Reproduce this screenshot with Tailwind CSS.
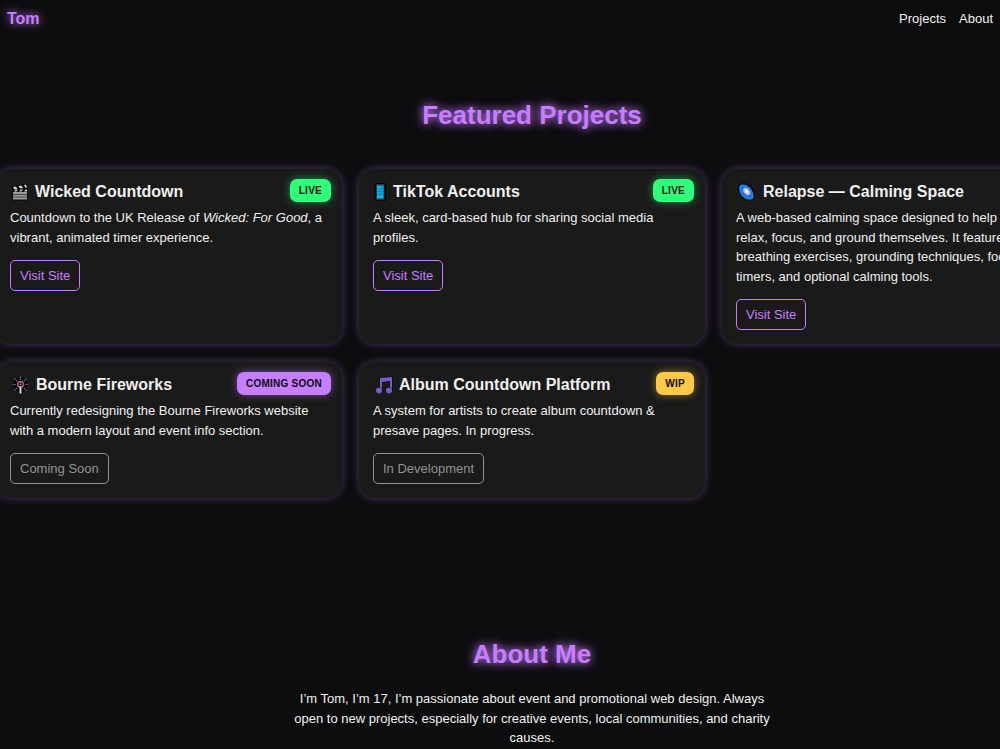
<!DOCTYPE html>
<html lang="en">
<head>
    <meta charset="UTF-8">
    <meta name="viewport" content="width=device-width, initial-scale=1.0">
    <title>Tom</title>
    <script src="https://cdn.jsdelivr.net/npm/@tailwindcss/browser@4"></script>
</head>
<body class="bg-[#0d0d0f] text-[#f0f0f0] font-['Liberation_Sans',Arial,sans-serif] text-[13px] leading-normal overflow-x-hidden">
    <!-- Navbar -->
    <header class="flex items-center justify-between px-[7px] h-[37px]">
        <a href="#" class="text-[16px] font-bold text-[#c77dff] [text-shadow:0_0_10px_#c77dff]">Tom</a>
        <nav class="flex gap-[13px]">
            <a href="#projects" class="hover:text-[#c77dff]">Projects</a>
            <a href="#about" class="hover:text-[#c77dff]">About</a>
        </nav>
    </header>

    <main class="-ml-1 -mr-[68px]">
        <!-- Projects -->
        <section id="projects" class="pt-[59px]">
            <h2 class="text-center text-[26px] font-bold text-[#c77dff] [text-shadow:0_0_8px_#c77dff,0_0_16px_rgba(199,125,255,0.4)] mb-[34px]">Featured Projects</h2>
            <div class="grid grid-cols-3 gap-x-[17px] gap-y-[18px]">
                <!-- Wicked -->
                <article class="relative bg-[#1a1a1a] rounded-[16px] p-[14px] pt-[13px] shadow-[0_0_8px_rgba(199,125,255,0.35)]">
                    <span class="absolute top-[10px] right-[11px] px-[9px] h-[23px] leading-[23px] rounded-[7px] bg-[#2eff7b] text-[#0d0d0f] text-[10px] font-bold tracking-wide shadow-[0_0_8px_rgba(46,255,123,0.5)]">LIVE</span>
                    <h3 class="flex items-center gap-[5px] text-[16px] leading-[20px] font-bold mb-[6px]">
                        <svg class="w-[20px] h-[20px] shrink-0" viewBox="0 0 20 20" aria-hidden="true">
                            <path d="M2 4.500 16 2l1.500.5v16H2z" fill="#050505"/>
                            <path d="M3 10h14v7.500H3z" fill="#9c9c9c"/>
                            <path d="M3 12.500h14M3 15h14" stroke="#444" stroke-width="1"/>
                            <path d="M3 5l3-.5 1.500 2.500-3 .5zM8.500 4l3-.5L13 6l-3 .5zM14 3l2-.5 1 3-1.500.5z" fill="#d0d0d0"/>
                            <path d="M4 9.500l1.500-2h2.500l-1.500 2zM9 9.500l1.500-2H13l-1.500 2zM14 9.500l1.500-2H17v2z" fill="#c4c4c4"/>
                        </svg>
                        Wicked Countdown
                    </h3>
                    <p class="mb-[13px]">Countdown to the UK Release of <em>Wicked: For Good</em>, a vibrant, animated timer experience.</p>
                    <a href="#" class="inline-block h-[31px] leading-[29px] px-[9px] border border-[#c77dff] rounded-[5px] text-[#c77dff]">Visit Site</a>
                </article>

                <!-- TikTok -->
                <article class="relative bg-[#1a1a1a] rounded-[16px] p-[14px] pt-[13px] shadow-[0_0_8px_rgba(199,125,255,0.35)]">
                    <span class="absolute top-[10px] right-[11px] px-[9px] h-[23px] leading-[23px] rounded-[7px] bg-[#2eff7b] text-[#0d0d0f] text-[10px] font-bold tracking-wide shadow-[0_0_8px_rgba(46,255,123,0.5)]">LIVE</span>
                    <h3 class="flex items-center gap-[5px] text-[16px] leading-[20px] font-bold mb-[6px]">
                        <svg class="w-[15px] h-[20px] shrink-0" viewBox="0 0 15 20" aria-hidden="true">
                            <rect x="1.500" y="1" width="11.500" height="18" rx="1.500" fill="#050505"/>
                            <rect x="3" y="2" width="8.500" height="16" rx="1" fill="#333"/>
                            <rect x="4" y="3.500" width="6.500" height="13" fill="#0cb4f2"/>
                            <path d="M4 6.500h6.500M4 9.500h6.500M4 12.500h6.500M6.500 6v8M8.500 3.500v10" stroke="#0877a8" stroke-width=".6"/>
                        </svg>
                        TikTok Accounts
                    </h3>
                    <p class="mb-[13px]">A sleek, card-based hub for sharing social media profiles.</p>
                    <a href="#" class="inline-block h-[31px] leading-[29px] px-[9px] border border-[#c77dff] rounded-[5px] text-[#c77dff]">Visit Site</a>
                </article>

                <!-- Relapse -->
                <article class="relative bg-[#1a1a1a] rounded-[16px] p-[14px] pt-[13px] shadow-[0_0_8px_rgba(199,125,255,0.35)]">
                    <h3 class="flex items-center gap-[5px] text-[16px] leading-[20px] font-bold mb-[6px]">
                        <svg class="w-[22px] h-[20px] shrink-0" viewBox="0 0 22 20" aria-hidden="true">
                            <defs>
                                <radialGradient id="core">
                                    <stop offset="0" stop-color="#fff"/>
                                    <stop offset=".45" stop-color="#e3d0ff"/>
                                    <stop offset="1" stop-color="#6f8bf5"/>
                                </radialGradient>
                            </defs>
                            <path d="M4 1.500h7c5 1.500 8 6.500 8 11l-1 5-3 1.500H11C6 17.500 2 13 2 8V4z" fill="#050505"/>
                            <path d="M4.500 2.800C8 1.800 13 3.500 15.500 7.500s2.800 8 .8 9.800C12.500 18.500 8 17 5.300 13 2.800 9.200 2.500 4.500 4.500 2.800z" fill="#1587e8"/>
                            <ellipse cx="10.500" cy="9.800" rx="6" ry="3.800" transform="rotate(50 10.500 9.800)" fill="#1163c4"/>
                            <ellipse cx="10.700" cy="9.500" rx="4.800" ry="3.200" transform="rotate(50 10.700 9.500)" fill="url(#core)"/>
                        </svg>
                        Relapse — Calming Space
                    </h3>
                    <p class="mb-[13px]">A web-based calming space designed to help users relax, focus, and ground themselves. It features breathing exercises, grounding techniques, focus timers, and optional calming tools.</p>
                    <a href="#" class="inline-block h-[31px] leading-[29px] px-[9px] border border-[#c77dff] rounded-[5px] text-[#c77dff]">Visit Site</a>
                </article>

                <!-- Bourne Fireworks -->
                <article class="relative bg-[#1a1a1a] rounded-[16px] p-[14px] pt-[13px] shadow-[0_0_8px_rgba(199,125,255,0.35)]">
                    <span class="absolute top-[10px] right-[11px] px-[9px] h-[23px] leading-[23px] rounded-[7px] bg-[#c77dff] text-[#0d0d0f] text-[10px] font-bold tracking-wide shadow-[0_0_8px_rgba(199,125,255,0.5)]">COMING SOON</span>
                    <h3 class="flex items-center gap-[5px] text-[16px] leading-[20px] font-bold mb-[6px]">
                        <svg class="w-[21px] h-[20px] shrink-0" viewBox="0 0 21 20" fill="none" aria-hidden="true">
                            <circle cx="10.500" cy="9.500" r="7.500" fill="#080808"/>
                            <path d="M10.500 1.500v3.500M2.500 9.500h3.500M15 9.500h3.500M4.500 3.500l3 3M16.500 3.500l-3 3M4.500 15.500l3-3M16.500 15.500l-3-3" stroke="#8a5a9e" stroke-width="1.200" stroke-dasharray="1.500 .7"/>
                            <rect x="7.800" y="6.800" width="5.400" height="5" rx="1.500" stroke="#c4637f" stroke-width="1.400"/>
                            <circle cx="10.500" cy="9.300" r="1" fill="#9d6ad0"/>
                            <path d="M10.500 12v6.500" stroke="#e4eaf0" stroke-width="1.800"/>
                        </svg>
                        Bourne Fireworks
                    </h3>
                    <p class="mb-[13px]">Currently redesigning the Bourne Fireworks website with a modern layout and event info section.</p>
                    <button disabled class="block h-[31px] leading-[29px] px-[9px] border border-[#949494] rounded-[5px] text-[#949494]">Coming Soon</button>
                </article>

                <!-- Album Countdown -->
                <article class="relative bg-[#1a1a1a] rounded-[16px] p-[14px] pt-[13px] shadow-[0_0_8px_rgba(199,125,255,0.35)]">
                    <span class="absolute top-[10px] right-[11px] px-[9px] h-[23px] leading-[23px] rounded-[7px] bg-[#ffc845] text-[#0d0d0f] text-[10px] font-bold tracking-wide shadow-[0_0_8px_rgba(255,200,69,0.5)]">WIP</span>
                    <h3 class="flex items-center gap-[5px] text-[16px] leading-[20px] font-bold mb-[6px]">
                        <svg class="w-[21px] h-[20px] shrink-0" viewBox="0 0 21 20" aria-hidden="true">
                            <g fill="#7a5cc8" stroke="#050505" stroke-width="1" paint-order="stroke">
                                <path d="M7 3l12-1v13h-2V6L9 7v9H7z"/>
                                <circle cx="6" cy="15.500" r="3"/>
                                <circle cx="16" cy="15.500" r="3"/>
                            </g>
                        </svg>
                        Album Countdown Platform
                    </h3>
                    <p class="mb-[13px]">A system for artists to create album countdown &amp; presave pages. In progress.</p>
                    <button disabled class="block h-[31px] leading-[29px] px-[9px] border border-[#949494] rounded-[5px] text-[#949494]">In Development</button>
                </article>
            </div>
        </section>

        <!-- About -->
        <section id="about" class="pt-[137px] text-center">
            <h2 class="text-[26px] font-bold text-[#c77dff] [text-shadow:0_0_8px_#c77dff,0_0_16px_rgba(199,125,255,0.4)] mb-[15px]">About Me</h2>
            <p class="max-w-[488px] mx-auto">I’m Tom, I’m 17, I’m passionate about event and promotional web design. Always open to new projects, especially for creative events, local communities, and charity causes.</p>
        </section>
    </main>
</body>
</html>
